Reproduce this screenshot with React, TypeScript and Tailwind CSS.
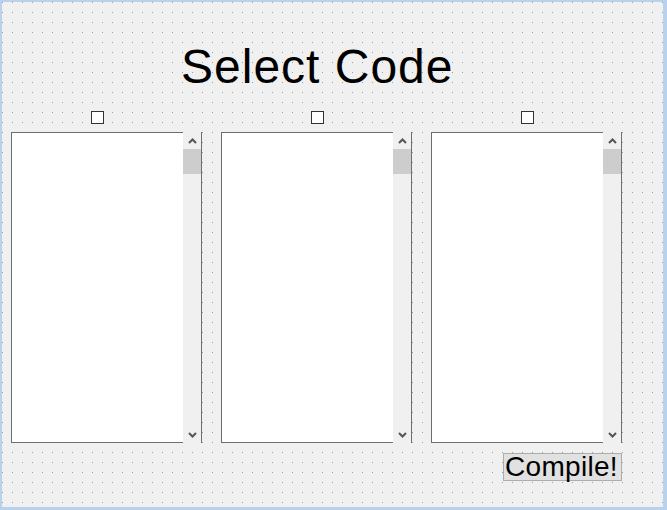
import React from 'react'

function Chevron({ down = false }: { down?: boolean }) {
  return (
    <svg width="9" height="6" viewBox="0 0 9 6" className={down ? 'rotate-180' : ''}>
      <path d="M1 5 L4.5 1.5 L8 5" fill="none" stroke="#555555" strokeWidth="2" />
    </svg>
  )
}

function ListBox() {
  return (
    <div className="flex h-[311px] w-[191px]">
      <div className="flex-1 border-y border-l border-[#6e6e6e] bg-white" />
      <div className="flex w-[19px] flex-col border-r border-[#6e6e6e] bg-[#f0f0f0]">
        <div className="flex h-[17px] items-center justify-center">
          <Chevron />
        </div>
        <div className="h-[25px] bg-[#cdcdcd]" />
        <div className="flex-1" />
        <div className="flex h-[17px] items-center justify-center">
          <Chevron down />
        </div>
      </div>
    </div>
  )
}

const columns = [80, 90, 90]

export default function App() {
  return (
    <div
      className="flex h-[510px] w-[667px] flex-col border-t-2 border-r-4 border-b-[3px] border-l-2 border-[#b9d1ea] bg-[#f0f0f0] bg-[conic-gradient(at_1px_1px,transparent_75%,#9e9e9e_0)] bg-[length:10px_10px] font-['Liberation_Sans',Arial,sans-serif] text-black"
    >
      <div className="mt-[41px] pl-[179px] text-[48px] leading-[48px] tracking-[1px]">Select Code</div>

      <div className="mt-[20px] flex gap-[19px] pl-[9px]">
        {columns.map((offset, i) => (
          <div key={i} className="flex w-[191px] flex-col">
            <div
              className={
                (offset === 80 ? 'ml-[80px]' : 'ml-[90px]') +
                ' h-[13px] w-[13px] border border-[#333333] bg-white'
              }
            />
            <div className="mt-[8px]">
              <ListBox />
            </div>
          </div>
        ))}
      </div>

      <div className="mt-[10px] flex w-[620px] justify-end">
        <button className="h-[28px] w-[119px] whitespace-nowrap border border-[#adadad] bg-[#e1e1e1] pl-[1px] text-left text-[28px] leading-[26px] tracking-[0.3px] text-black">
          Compile!
        </button>
      </div>
    </div>
  )
}
